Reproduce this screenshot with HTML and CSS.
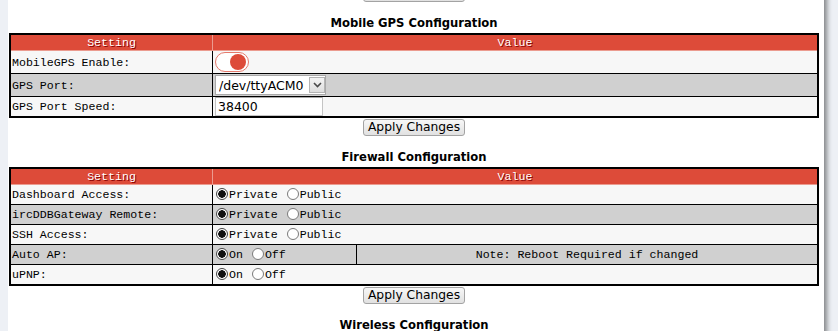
FILE: index.html
```html
<!DOCTYPE html>
<html lang="en">
<head>
    <meta charset="UTF-8">
    <meta name="viewport" content="width=device-width, initial-scale=1.0">
    <title>Pi-Star - Configuration</title>
    <link rel="stylesheet" href="styles.css">
</head>
<body>
    <div class="contentwide">
        <div class="apply"><button type="button">Apply Changes</button></div>

        <h2>Mobile GPS Configuration</h2>
        <table>
            <tr>
                <th class="col-setting">Setting</th>
                <th>Value</th>
            </tr>
            <tr>
                <td class="left">MobileGPS Enable:</td>
                <td class="left"><span class="toggle"><span class="knob"></span></span></td>
            </tr>
            <tr>
                <td class="left">GPS Port:</td>
                <td class="left">
                    <span class="select">
                        <select name="mobilegpsPort">
                            <option selected>/dev/ttyACM0</option>
                            <option>/dev/ttyUSB0</option>
                        </select>
                        <span class="arrow">
                            <svg width="9" height="6" viewBox="0 0 9 6"><path d="M1 1 L4.5 4.5 L8 1" fill="none" stroke="#4a4a4a" stroke-width="1.6"/></svg>
                        </span>
                    </span>
                </td>
            </tr>
            <tr>
                <td class="left">GPS Port Speed:</td>
                <td class="left"><input type="text" class="text-input" name="mobilegpsSpeed" value="38400"></td>
            </tr>
        </table>
        <div class="apply"><button type="button">Apply Changes</button></div>

        <h2>Firewall Configuration</h2>
        <table>
            <tr>
                <th class="col-setting">Setting</th>
                <th colspan="2">Value</th>
            </tr>
            <tr>
                <td class="left">Dashboard Access:</td>
                <td class="left" colspan="2"><input type="radio" class="radio" name="dashAccess" checked>Private <input type="radio" class="radio" name="dashAccess">Public</td>
            </tr>
            <tr>
                <td class="left">ircDDBGateway Remote:</td>
                <td class="left" colspan="2"><input type="radio" class="radio" name="ircRemote" checked>Private <input type="radio" class="radio" name="ircRemote">Public</td>
            </tr>
            <tr>
                <td class="left">SSH Access:</td>
                <td class="left" colspan="2"><input type="radio" class="radio" name="sshAccess" checked>Private <input type="radio" class="radio" name="sshAccess">Public</td>
            </tr>
            <tr>
                <td class="left">Auto AP:</td>
                <td class="left col-onoff"><input type="radio" class="radio" name="autoAp" checked>On <input type="radio" class="radio" name="autoAp">Off</td>
                <td>Note: Reboot Required if changed</td>
            </tr>
            <tr>
                <td class="left">uPNP:</td>
                <td class="left" colspan="2"><input type="radio" class="radio" name="upnp" checked>On <input type="radio" class="radio" name="upnp">Off</td>
            </tr>
        </table>
        <div class="apply"><button type="button">Apply Changes</button></div>

        <h2>Wireless Configuration</h2>
    </div>
</body>
</html>
```

FILE: styles.css
```css
body {
    margin: 0;
    background: #edf0f5;
    font-family: 'DejaVu Sans', Verdana, sans-serif;
    color: #000000;
    overflow: hidden;
}

.contentwide {
    width: 810px;
    min-height: 400px;
    margin: -16px 0 0 8px;
    padding: 0 5px 0 1px;
    background: #ffffff;
    box-shadow: 5px 0 5px -2px rgba(0, 0, 0, 0.45);
}

h2 {
    font-size: 11.6px;
    font-weight: bold;
    line-height: 16px;
    text-align: center;
    margin: 13px 0 2px;
}

.apply {
    height: 17px;
    padding-top: 1px;
    text-align: center;
}

button {
    height: 17px;
    padding: 0 4px;
    font-family: 'DejaVu Sans', Verdana, sans-serif;
    font-size: 12.3px;
    line-height: 15px;
    color: #000000;
    border: 1px solid #a3a3a3;
    border-radius: 3px;
    background: linear-gradient(#f7f7f7, #e1e1e1);
    vertical-align: top;
}

table {
    width: 810px;
    border-collapse: collapse;
    border: 2px solid #000000;
    text-align: center;
    white-space: nowrap;
    font-family: 'Liberation Mono', 'Courier New', monospace;
    font-size: 11.6px;
}

table th {
    height: 15px;
    padding: 0;
    font-weight: normal;
    line-height: 15px;
    color: #ffffff;
    text-shadow: 1px 1px #8b0000;
    background: #dd4b39;
    border: 1px solid #eb9b8f;
}

table tr:nth-child(even) {
    background: #f7f7f7;
}

table tr:nth-child(odd) {
    background: #d0d0d0;
}

table td {
    height: 19px;
    padding: 0 1px;
    line-height: 15px;
    color: #000000;
    border: 1px solid #000000;
}

td.left {
    text-align: left;
}

.col-setting {
    width: 201px;
}

.col-onoff {
    width: 141px;
}

/* toggle switch */
.toggle {
    display: inline-block;
    position: relative;
    width: 32px;
    height: 18px;
    margin: 1px 0 1px 1px;
    vertical-align: middle;
    border: 1px solid #e57a6c;
    border-radius: 10px;
    background: #ffffff;
}

.toggle .knob {
    position: absolute;
    top: 1px;
    right: 2px;
    width: 16px;
    height: 16px;
    border-radius: 50%;
    background: #dd4b39;
}

/* select */
.select {
    display: inline-block;
    position: relative;
    vertical-align: middle;
    margin: 1px 0 1px 1px;
}

.select select {
    appearance: none;
    -webkit-appearance: none;
    display: block;
    width: 111px;
    height: 20px;
    padding: 0 0 0 3px;
    font-family: 'DejaVu Sans', Verdana, sans-serif;
    font-size: 12.5px;
    color: #000000;
    background: #ffffff;
    border: 1px solid #a9a9a9;
    border-radius: 0;
}

.select .arrow {
    position: absolute;
    top: 2px;
    right: 1px;
    width: 14px;
    height: 14px;
    display: flex;
    align-items: center;
    justify-content: center;
    border: 1px solid #b4b4b4;
    background: linear-gradient(#f4f4f4, #dedede);
    pointer-events: none;
}

.text-input {
    width: 108px;
    height: 19px;
    box-sizing: border-box;
    margin: 0 0 0 1px;
    padding: 0 2px;
    vertical-align: middle;
    font-family: 'DejaVu Sans', Verdana, sans-serif;
    font-size: 12.5px;
    color: #000000;
    border: 1px solid #c4c4c4;
    border-top-color: #a9a9a9;
    border-radius: 0;
}

/* radio buttons */
.radio {
    appearance: none;
    -webkit-appearance: none;
    width: 12px;
    height: 12px;
    margin: 0 1px 0 2px;
    vertical-align: -2px;
    border: 1px solid #7a7a7a;
    border-radius: 50%;
    background: #ffffff;
}

.radio:checked {
    border-color: #444444;
    background: radial-gradient(circle, #111111 0, #111111 3.5px, #ffffff 4px);
}
```
